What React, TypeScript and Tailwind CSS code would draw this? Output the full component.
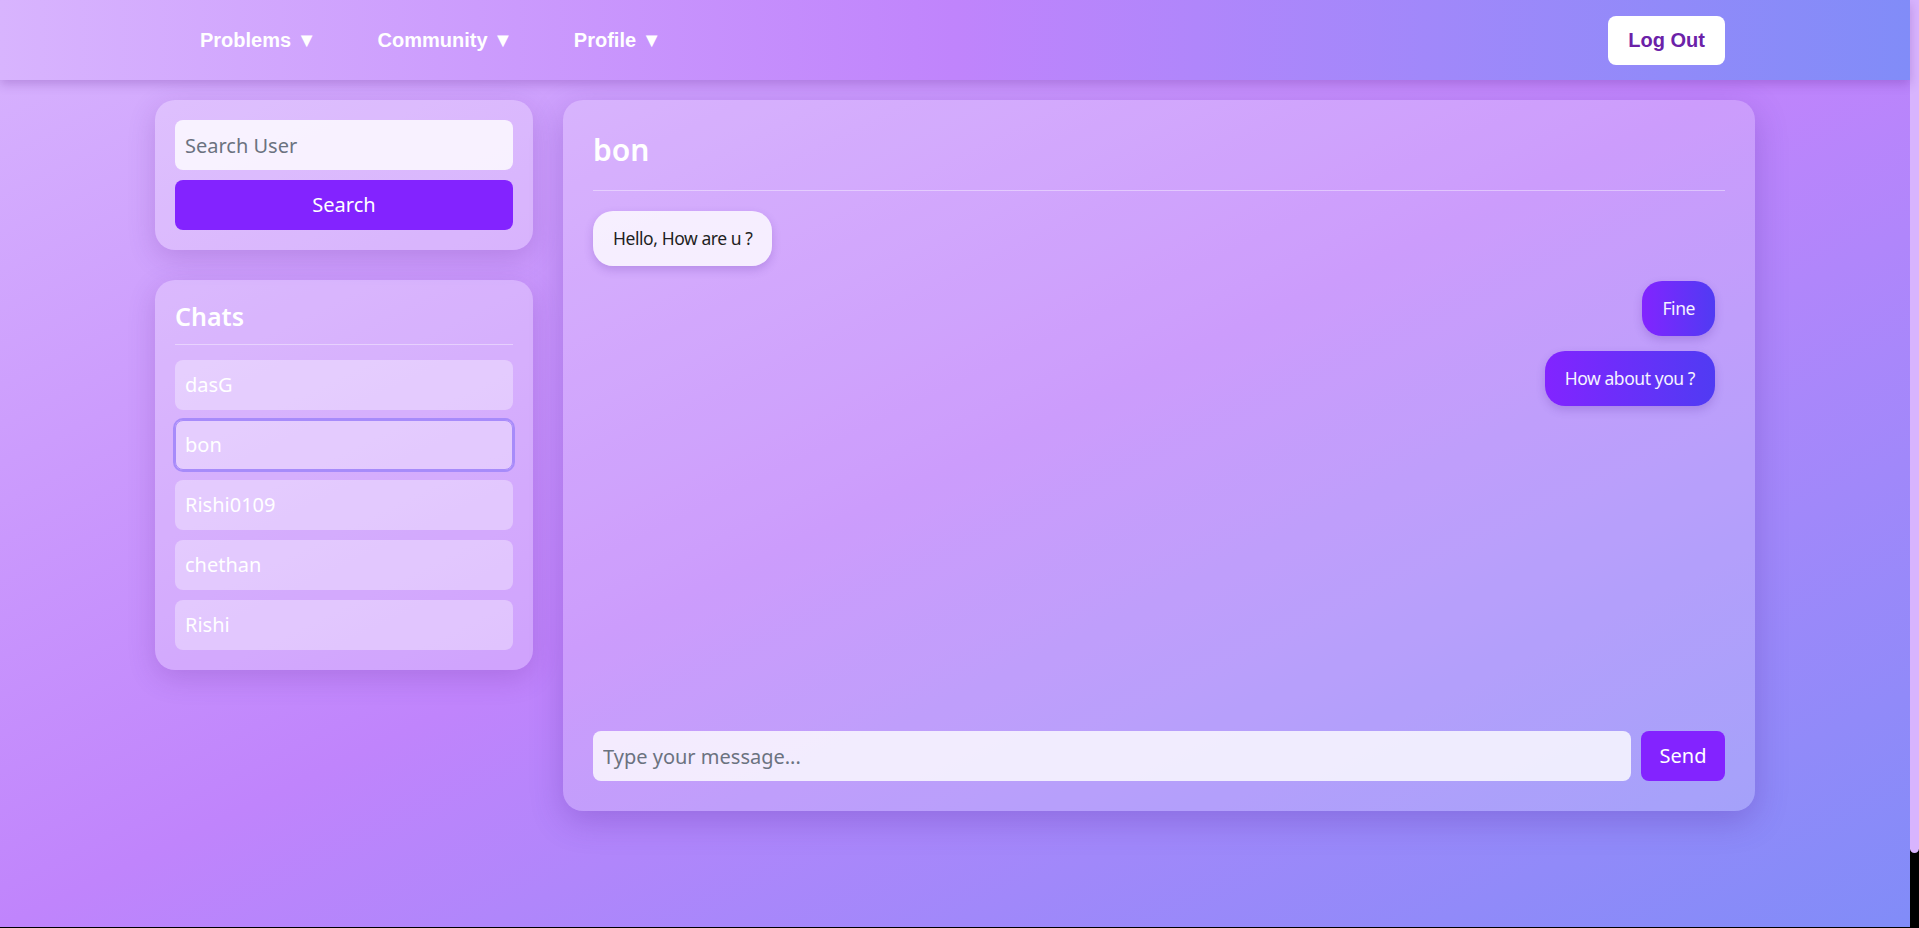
import { useState } from "react";

const chats = ["dasG", "bon", "Rishi0109", "chethan", "Rishi"];

const messages = [
  { text: "Hello, How are u ?", mine: false },
  { text: "Fine", mine: true },
  { text: "How about you ?", mine: true },
];

export default function App() {
  const [active, setActive] = useState("bon");
  const [search, setSearch] = useState("");
  const [draft, setDraft] = useState("");

  return (
    <div className="h-[928px] w-full overflow-hidden bg-black">
      <div className="flex h-[927px]">
        <div className="flex flex-1 flex-col bg-[linear-gradient(to_bottom_right,#d8b4fe,#c084fc,#818cf8)] font-['Noto_Sans',sans-serif]">
          <nav className="relative z-10 flex h-[80px] shrink-0 items-center justify-between bg-[linear-gradient(to_right,#d8b4fe,#c084fc,#818cf8)] pl-[200px] pr-[185px] shadow-[0_4px_10px_rgba(88,28,135,0.25)]">
            <ul className="flex items-center gap-[61px] font-['Liberation_Sans',Arial,sans-serif] text-[20px] font-bold text-white">
              <li>Problems ▼</li>
              <li>Community ▼</li>
              <li>Profile ▼</li>
            </ul>
            <button className="h-[49px] rounded-[8px] bg-white px-[20px] font-['Liberation_Sans',Arial,sans-serif] text-[20px] font-bold text-[#6b21a8]">
              Log Out
            </button>
          </nav>

          <main className="mx-auto flex w-[1600px] gap-[30px] pt-[20px]">
            <aside className="flex w-[378px] shrink-0 flex-col gap-[30px]">
              <div className="flex flex-col gap-[10px] rounded-[20px] bg-white/25 p-[20px] shadow-[0_8px_28px_rgba(88,28,135,0.2)]">
                <input
                  value={search}
                  onChange={(e) => setSearch(e.target.value)}
                  placeholder="Search User"
                  className="h-[50px] rounded-[8px] bg-white/80 px-[10px] text-[20px] text-gray-800 outline-none placeholder:text-[#6b7280]"
                />
                <button className="h-[50px] rounded-[8px] bg-[#8323ff] text-[20px] text-white">
                  Search
                </button>
              </div>

              <div className="rounded-[20px] bg-white/25 p-[20px] shadow-[0_8px_28px_rgba(88,28,135,0.2)]">
                <h2 className="border-b border-white/40 pb-[12px] text-[25px] font-semibold leading-[32px] text-white">
                  Chats
                </h2>
                <ul className="mt-[15px] flex flex-col gap-[10px]">
                  {chats.map((name) => (
                    <li
                      key={name}
                      onClick={() => setActive(name)}
                      className={
                        name === active
                          ? "flex h-[50px] items-center rounded-[8px] border border-[#a78bfa] bg-white/35 px-[9px] text-[20px] text-white ring-2 ring-[#a78bfa]"
                          : "flex h-[50px] items-center rounded-[8px] bg-white/35 px-[10px] text-[20px] text-white"
                      }
                    >
                      {name}
                    </li>
                  ))}
                </ul>
              </div>
            </aside>

            <section className="flex h-[711px] flex-1 flex-col rounded-[20px] bg-white/20 p-[30px] shadow-[0_10px_32px_rgba(76,29,149,0.25)]">
              <h1 className="border-b border-white/40 pb-[20px] text-[30px] font-semibold leading-[40px] text-white">
                {active}
              </h1>
              <div className="flex flex-1 flex-col gap-[15px] pr-[10px] pt-[20px]">
                {messages.map((m, i) =>
                  m.mine ? (
                    <div
                      key={i}
                      className="self-end rounded-[20px] bg-[linear-gradient(to_right,#8224ff,#503bf3)] px-[20px] py-[15px] text-[17.5px] leading-[25px] tracking-[-0.025em] text-[#f5f3ff] shadow-[0_4px_10px_rgba(76,29,149,0.2)]"
                    >
                      {m.text}
                    </div>
                  ) : (
                    <div
                      key={i}
                      className="self-start rounded-[20px] bg-white/80 px-[20px] py-[15px] text-[17.5px] leading-[25px] tracking-[-0.025em] text-[#1f1f23] shadow-[0_4px_10px_rgba(76,29,149,0.2)]"
                    >
                      {m.text}
                    </div>
                  )
                )}
              </div>
              <div className="flex gap-[10px]">
                <input
                  value={draft}
                  onChange={(e) => setDraft(e.target.value)}
                  placeholder="Type your message..."
                  className="h-[50px] flex-1 rounded-[8px] bg-white/80 px-[10px] text-[20px] text-gray-800 outline-none placeholder:text-[#6b7280]"
                />
                <button className="h-[50px] w-[84px] rounded-[8px] bg-[#8323ff] text-[20px] text-white">
                  Send
                </button>
              </div>
            </section>
          </main>
        </div>
        <div className="w-[9px] shrink-0 bg-black">
          <div className="h-[853px] rounded-b-full bg-[#d8b4fe]" />
        </div>
      </div>
    </div>
  );
}
